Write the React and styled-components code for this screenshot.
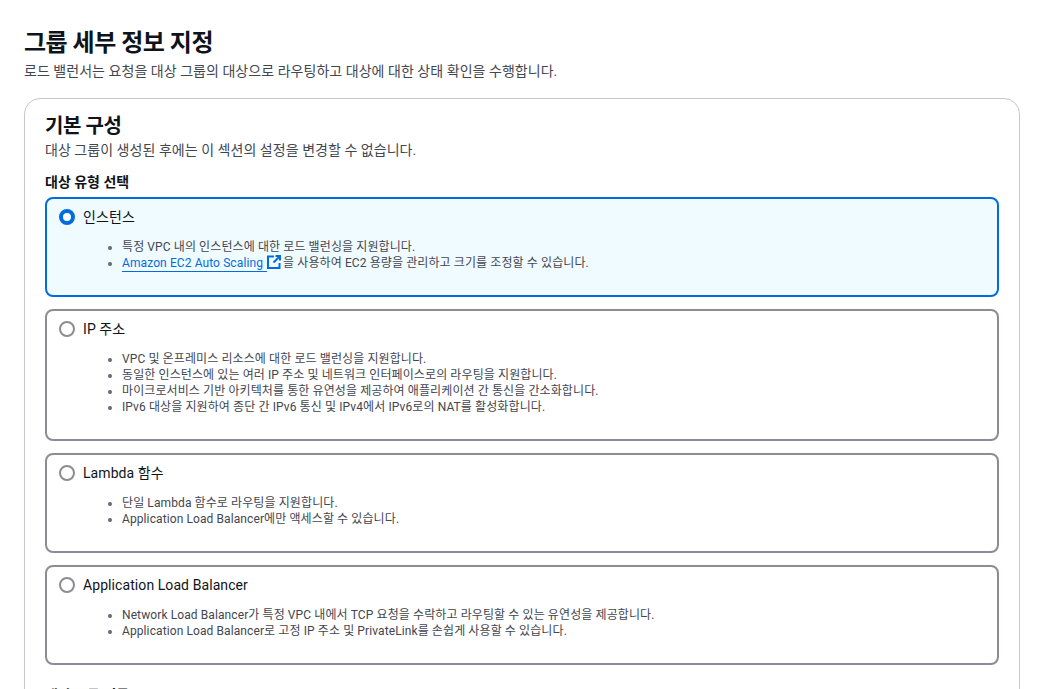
import React from "react";
import styled, { createGlobalStyle } from "styled-components";

const GlobalStyle = createGlobalStyle`
    html, body {
        margin: 0;
        height: 100%;
        overflow: hidden;
        background: #ffffff;
    }
    body {
        font-family: Roboto, "Noto Sans CJK KR", sans-serif;
        color: #0f141a;
    }
`;

const Page = styled.div`
    padding: 26px 38px 0 24px;
`;

const Title = styled.h1`
    margin: 0;
    font-size: 24px;
    line-height: 34px;
    font-weight: 700;
    letter-spacing: -0.5px;
    color: #0f141a;
`;

const Desc = styled.p`
    margin: ${(p) => p.$top || 0}px 0 0;
    font-size: 14px;
    line-height: 20px;
    letter-spacing: 0.04px;
    color: #424650;
`;

const Card = styled.section`
    margin-top: 17px;
    padding: 15px 20px 20px;
    border: 1px solid #c6c6cd;
    border-radius: 16px;
`;

const CardTitle = styled.h2`
    margin: 0;
    font-size: 20px;
    line-height: 24px;
    font-weight: 700;
    letter-spacing: -0.4px;
`;

const FieldLabel = styled.div`
    margin-top: 12px;
    font-size: 14px;
    line-height: 20px;
    font-weight: 700;
`;

const Tiles = styled.div`
    display: flex;
    flex-direction: column;
    gap: 12px;
    margin-top: 5px;
`;

const Tile = styled.div`
    box-sizing: border-box;
    height: ${(p) => p.$height}px;
    padding: 10px 12px;
    border: 2px solid ${(p) => (p.$selected ? "#006ce0" : "#8c8c94")};
    border-radius: 8px;
    background: ${(p) => (p.$selected ? "#f0fbff" : "#ffffff")};
`;

const TileHead = styled.div`
    display: flex;
    align-items: center;
    gap: 8px;
    height: 16px;
    font-size: 14px;
    line-height: 16px;
    letter-spacing: 0.08px;
    color: #0f141a;
`;

const Radio = styled.span`
    box-sizing: border-box;
    flex: none;
    width: 16px;
    height: 16px;
    border-radius: 50%;
    border: ${(p) => (p.$selected ? "4.5px solid #006ce0" : "2px solid #8c8c94")};
    background: #ffffff;
`;

const Bullets = styled.ul`
    margin: 14px 0 0;
    padding: 0 0 0 63px;
    font-size: 12px;
    line-height: 16px;
    letter-spacing: 0.1px;
    color: #424650;

    li::marker {
        color: #656871;
    }
`;

const Link = styled.a`
    color: #006ce0;
    text-decoration: none;
    border-bottom: 1px solid #006ce0;
    padding-bottom: 1px;
    padding-right: 1px;
`;

const External = styled.svg`
    width: 14px;
    height: 14px;
    margin-right: 2px;
    vertical-align: -2px;
`;

const NextLabel = styled(FieldLabel)`
    margin-top: 20px;
`;

const tiles = [
    {
        label: "인스턴스",
        selected: true,
        height: 100,
        items: [
            "특정 VPC 내의 인스턴스에 대한 로드 밸런싱을 지원합니다.",
            <>
                <Link href="#">Amazon EC2 Auto Scaling&nbsp;</Link>
                <External viewBox="0 0 14 14" fill="none" stroke="#006ce0" strokeWidth="2">
                    <path d="M7 1.5H1v11.5h11.5V8" />
                    <path d="M6.5 7.5l6-6M8.5 1h4.5v4.5" />
                </External>
                을 사용하여 EC2 용량을 관리하고 크기를 조정할 수 있습니다.
            </>,
        ],
    },
    {
        label: "IP 주소",
        height: 132,
        items: [
            "VPC 및 온프레미스 리소스에 대한 로드 밸런싱을 지원합니다.",
            "동일한 인스턴스에 있는 여러 IP 주소 및 네트워크 인터페이스로의 라우팅을 지원합니다.",
            "마이크로서비스 기반 아키텍처를 통한 유연성을 제공하여 애플리케이션 간 통신을 간소화합니다.",
            "IPv6 대상을 지원하여 종단 간 IPv6 통신 및 IPv4에서 IPv6로의 NAT를 활성화합니다.",
        ],
    },
    {
        label: "Lambda 함수",
        height: 100,
        items: [
            "단일 Lambda 함수로 라우팅을 지원합니다.",
            "Application Load Balancer에만 액세스할 수 있습니다.",
        ],
    },
    {
        label: "Application Load Balancer",
        height: 100,
        items: [
            "Network Load Balancer가 특정 VPC 내에서 TCP 요청을 수락하고 라우팅할 수 있는 유연성을 제공합니다.",
            "Application Load Balancer로 고정 IP 주소 및 PrivateLink를 손쉽게 사용할 수 있습니다.",
        ],
    },
];

const App = () => {
    return (
        <Page>
            <GlobalStyle />
            <Title>그룹 세부 정보 지정</Title>
            <Desc $top={1}>로드 밸런서는 요청을 대상 그룹의 대상으로 라우팅하고 대상에 대한 상태 확인을 수행합니다.</Desc>
            <Card>
                <CardTitle>기본 구성</CardTitle>
                <Desc $top={2}>대상 그룹이 생성된 후에는 이 섹션의 설정을 변경할 수 없습니다.</Desc>
                <FieldLabel>대상 유형 선택</FieldLabel>
                <Tiles>
                    {tiles.map((tile) => (
                        <Tile key={tile.label} $selected={tile.selected} $height={tile.height}>
                            <TileHead>
                                <Radio $selected={tile.selected} />
                                {tile.label}
                            </TileHead>
                            <Bullets>
                                {tile.items.map((item, i) => (
                                    <li key={i}>{item}</li>
                                ))}
                            </Bullets>
                        </Tile>
                    ))}
                </Tiles>
                <NextLabel>대상 그룹 이름</NextLabel>
            </Card>
        </Page>
    );
};

export default App;
